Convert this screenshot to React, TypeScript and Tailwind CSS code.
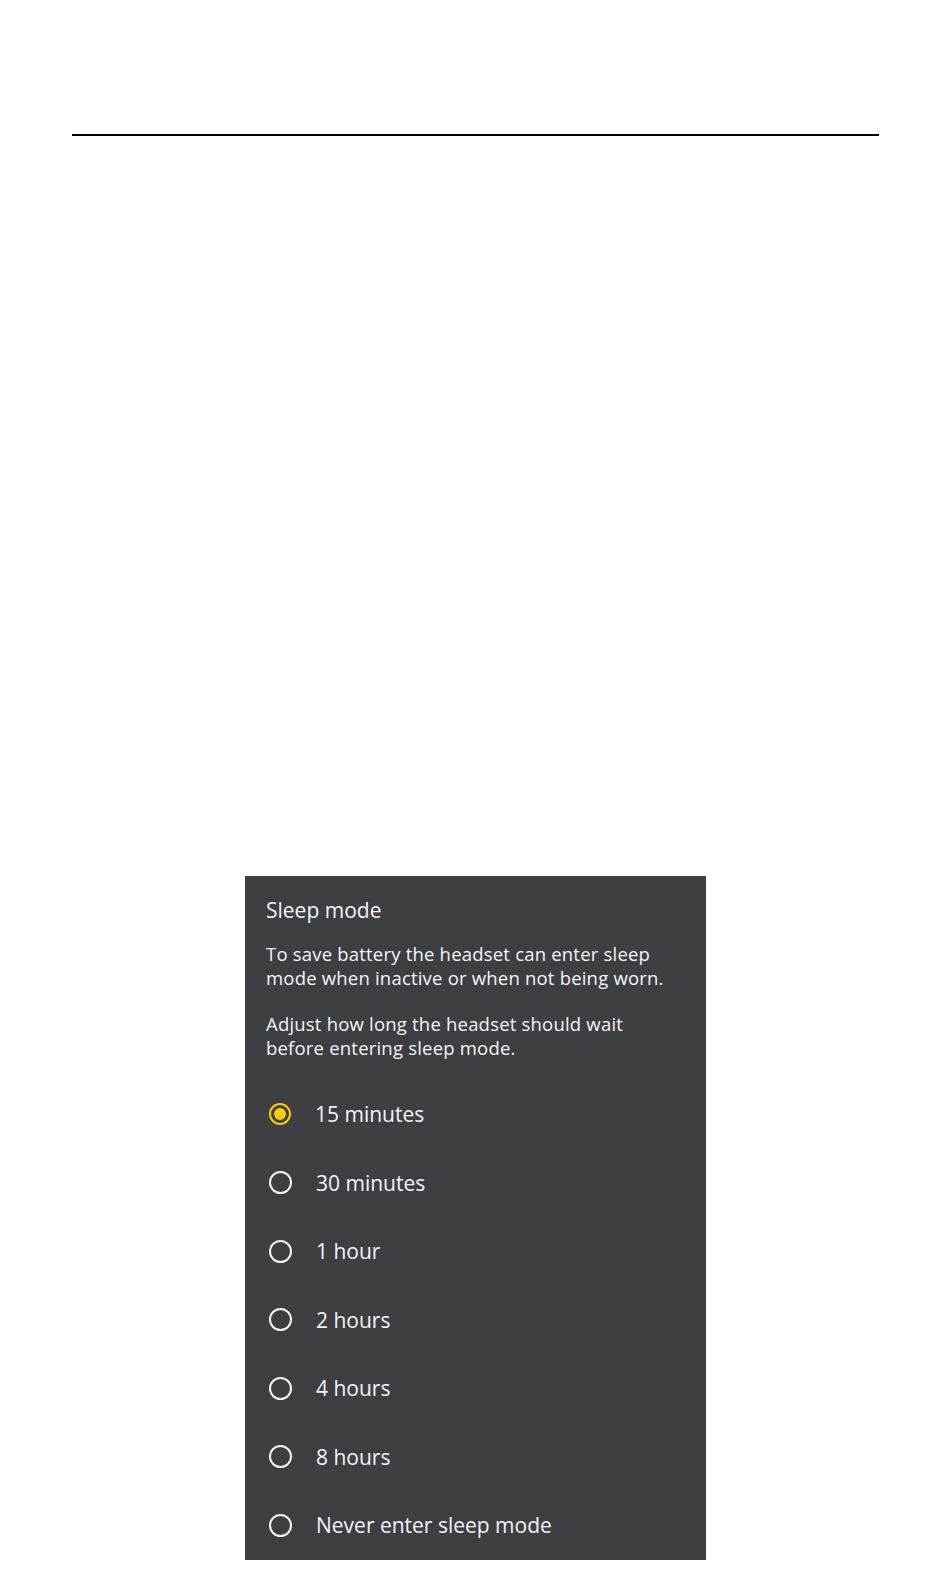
const options = [
  "15 minutes",
  "30 minutes",
  "1 hour",
  "2 hours",
  "4 hours",
  "8 hours",
  "Never enter sleep mode",
];

function Radio({ checked }: { checked: boolean }) {
  if (checked) {
    return (
      <span className="flex h-[22px] w-[22px] shrink-0 items-center justify-center rounded-full border-[2.5px] border-[#f5cd0f]">
        <span className="h-[12px] w-[12px] rounded-full bg-[#f5cd0f]" />
      </span>
    );
  }
  return (
    <span className="h-[23px] w-[23px] shrink-0 rounded-full border-[2.5px] border-[#f4f4f4]" />
  );
}

export default function App() {
  const selected = "15 minutes";

  return (
    <div className="min-h-[1580px] bg-white font-['Open_Sans',sans-serif]">
      <div className="px-[72px] pt-[134px]">
        <div className="h-[2px] w-[807px] bg-black" />
      </div>

      <div className="mt-[740px] ml-[245px] w-[461px] bg-[#3e3f43] px-[21px] pt-[20px] text-[#f4f4f4]">
        <h2 className="text-[21px] leading-[28px]">Sleep mode</h2>
        <p className="mt-[18px] text-[18.5px] leading-[23.5px] tracking-[0.2px]">
          To save battery the headset can enter sleep
          <br />
          mode when inactive or when not being worn.
        </p>
        <p className="mt-[23px] text-[18.5px] leading-[23.5px] tracking-[0.2px]">
          Adjust how long the headset should wait
          <br />
          before entering sleep mode.
        </p>

        <ul className="mt-[21px]">
          {options.map((opt) => (
            <li key={opt} className="flex h-[68.5px] items-center gap-[24px] pl-[3px]">
              <Radio checked={opt === selected} />
              <span className="text-[21px] leading-[28px]">{opt}</span>
            </li>
          ))}
        </ul>
      </div>
    </div>
  );
}
